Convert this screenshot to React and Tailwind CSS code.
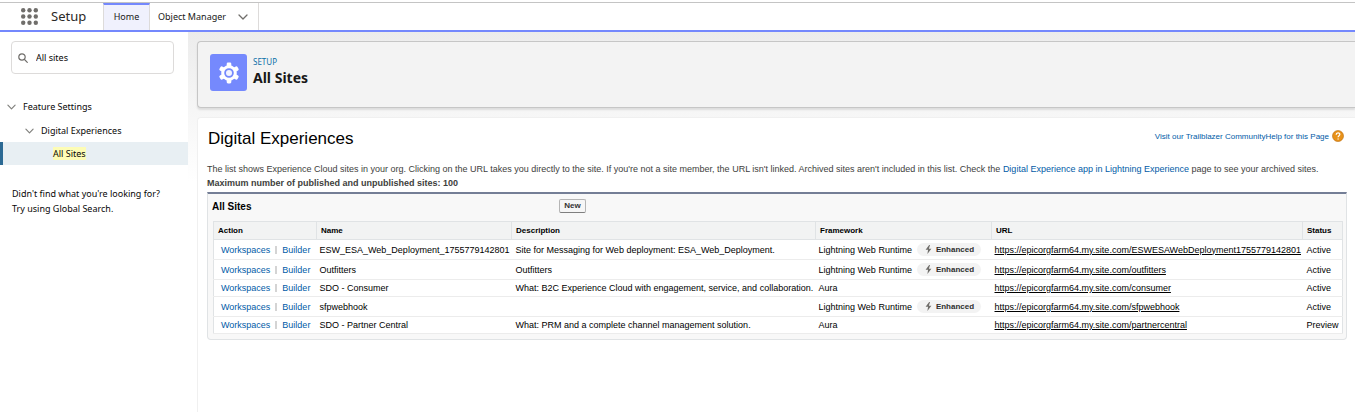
import React from "react";

const sites = [
  { name: "ESW_ESA_Web_Deployment_1755779142801", description: "Site for Messaging for Web deployment: ESA_Web_Deployment.", enhanced: true, path: "ESWESAWebDeployment1755779142801", status: "Active" },
  { name: "Outfitters", description: "Outfitters", enhanced: true, path: "outfitters", status: "Active" },
  { name: "SDO - Consumer", description: "What: B2C Experience Cloud with engagement, service, and collaboration.", enhanced: false, path: "consumer", status: "Active" },
  { name: "sfpwebhook", description: "", enhanced: true, path: "sfpwebhook", status: "Active" },
  { name: "SDO - Partner Central", description: "What: PRM and a complete channel management solution.", enhanced: false, path: "partnercentral", status: "Preview" },
];

const columns = [
  { label: "Action", width: "w-[103px]" },
  { label: "Name", width: "w-[195px]" },
  { label: "Description", width: "w-[304px]" },
  { label: "Framework", width: "w-[176px]" },
  { label: "URL", width: "" },
  { label: "Status", width: "w-[40px]" },
];

function Chevron({ className }) {
  return (
    <svg viewBox="0 0 10 6" className={className} fill="none" stroke="currentColor" strokeWidth="1.3" strokeLinecap="round" strokeLinejoin="round" aria-hidden="true">
      <path d="M1 1l4 4 4-4" />
    </svg>
  );
}

function AppLauncher() {
  const steps = [2.2, 8.5, 14.8];
  return (
    <svg viewBox="0 0 17 17" className="size-[17px]" fill="#706e6b" aria-hidden="true">
      {steps.map((y) => steps.map((x) => <circle key={`${x}-${y}`} cx={x} cy={y} r="2.2" />))}
    </svg>
  );
}

function Gear() {
  const teeth = [0, 60, 120, 180, 240, 300];
  return (
    <svg viewBox="0 0 22 22" className="size-[22px]" aria-hidden="true">
      <circle cx="11" cy="11" r="7.8" fill="#fff" />
      {teeth.map((angle) => (
        <rect key={angle} x="8.7" y="0.6" width="4.6" height="5" rx="1.3" fill="#fff" transform={`rotate(${angle} 11 11)`} />
      ))}
      <circle cx="11" cy="11" r="3.9" fill="#f3f4ff" stroke="#7589fd" strokeWidth="1.8" />
    </svg>
  );
}

function Header() {
  return (
    <header className="border-b-2 border-[#7488fd] pt-[2px]">
      <div className="flex h-7 items-stretch border-t border-[#c4c4c4]">
        <button type="button" aria-label="App Launcher" className="flex w-[51px] items-center justify-end pr-[13px]">
          <AppLauncher />
        </button>
        <span className="flex w-[52px] items-center text-[13px] text-[#2b2826]">Setup</span>
        <nav className="flex text-[9px] text-[#181818]">
          <a href="#home" className="flex w-[47px] items-center justify-center border-x border-t-2 border-x-[#dddbda] border-t-[#7488fd] bg-[#f0f1fd] pb-[2px]">Home</a>
          <a href="#object-manager" className="flex w-[109px] items-center justify-between border-r border-[#dddbda] pl-2 pr-[10px]">
            Object Manager
            <Chevron className="h-[6px] w-[10px] text-[#706e6b]" />
          </a>
        </nav>
      </div>
    </header>
  );
}

function Sidebar() {
  return (
    <aside className="w-[188px] shrink-0 bg-white pt-[9px] text-[9px] text-[#080707]">
      <label className="ml-[11px] mr-[14px] flex h-[33px] items-center gap-2 rounded border border-[#dddbda] px-[6px] pt-px">
        <svg viewBox="0 0 10 10" className="size-[10px] shrink-0" fill="none" stroke="#706e6b" strokeWidth="1.2" strokeLinecap="round" aria-hidden="true">
          <circle cx="4" cy="4" r="3.2" />
          <path d="M6.5 6.5L9.3 9.3" />
        </svg>
        <input aria-label="Quick Find" defaultValue="All sites" className="w-full min-w-0 bg-transparent outline-none" />
      </label>
      <ul className="mt-[21px]">
        <li>
          <button type="button" className="flex h-6 w-full items-center gap-[7px] pl-[7px]">
            <Chevron className="h-[6px] w-[9px] text-[#80807d]" />
            Feature Settings
          </button>
          <ul>
            <li>
              <button type="button" className="flex h-[23px] w-full items-center gap-[7px] pl-[25px]">
                <Chevron className="h-[6px] w-[9px] text-[#80807d]" />
                Digital Experiences
              </button>
              <ul>
                <li>
                  <a href="#all-sites" className="flex h-[23px] items-center border-l-[3px] border-[#2c6a94] bg-[#e8eff3] pl-[50px]">
                    <mark className="bg-[#fdfcb5] leading-[13px] text-inherit">All Sites</mark>
                  </a>
                </li>
              </ul>
            </li>
          </ul>
        </li>
      </ul>
      <p className="mt-[21px] pl-3 leading-[15px]">
        Didn't find what you're looking for?
        <br />
        Try using Global Search.
      </p>
    </aside>
  );
}

function PageHeader() {
  return (
    <section className="flex h-[67px] rounded-l border border-r-0 border-[#c6c6c6] bg-[#f3f3f3] py-3 pl-3 shadow-[0_2px_2px_rgba(0,0,0,0.1)]">
      <span className="flex size-[37px] items-center justify-center rounded-[3px] bg-[#7589fd]">
        <Gear />
      </span>
      <div className="pl-[6px] pt-[2px]">
        <p className="text-[8px] leading-3 text-[#0b6fa8]">SETUP</p>
        <h1 className="text-[14px] font-bold leading-[19px] text-[#181818]">All Sites</h1>
      </div>
    </section>
  );
}

function EnhancedBadge() {
  return (
    <span className="ml-[5px] inline-flex h-[13px] items-center gap-1 rounded-full bg-[#f3f3f3] pl-2 pr-[7px] text-[8px] font-bold text-[#2e2e2e]">
      <svg viewBox="0 0 7 10" className="h-[9px] w-[7px]" fill="#706e6b" aria-hidden="true">
        <path d="M4.2 0L0.3 5.4H3L2.3 10L6.7 4.1H3.9L5.2 0Z" />
      </svg>
      Enhanced
    </span>
  );
}

function SiteTable() {
  return (
    <section className="rounded-b border border-t-2 border-[#e0e3e5] border-t-[#747e96] bg-[#f8f8f8] pb-[5px] pl-1 pr-[3px]">
      <div className="flex h-[27px] items-center pb-[3px]">
        <h3 className="w-[347px] text-[10px] font-bold text-black">All Sites</h3>
        <button type="button" className="h-[14px] w-[27px] rounded-[2px] border border-[#b5b5b5] border-b-[#7f7f7f] bg-[#f6f6f6] text-[8px] font-bold leading-3 text-[#333]">New</button>
      </div>
      <div className="pl-px">
        <table className="w-full table-fixed border-collapse border border-[#e0e3e5] bg-white text-left text-[9px] text-black">
          <thead>
            <tr className="h-[18px] bg-[#f2f3f3] text-[8px]">
              {columns.map((c) => (
                <th key={c.label} scope="col" className={`${c.width} whitespace-nowrap border border-[#e0e3e5] py-0 pl-[4px] font-bold`}>{c.label}</th>
              ))}
            </tr>
          </thead>
          <tbody>
            {sites.map((s) => (
              <tr key={s.name} className={`${s.enhanced ? "h-5" : "h-[17px]"} whitespace-nowrap border-b border-[#ececec] leading-3`}>
                <td className="py-0 pl-[7px] text-[#015ba7]">
                  <div className="flex items-center">
                    <a href="#workspaces">Workspaces</a>
                    <span className="mx-[5px] h-[8px] w-[2px] bg-[#d4d4d4]" />
                    <a href="#builder">Builder</a>
                  </div>
                </td>
                <td className="py-0 pl-[3px]">{s.name}</td>
                <td className="py-0 pl-1">{s.description}</td>
                <td className="py-0 pl-[3px]">
                  <div className="flex items-center">
                    {s.enhanced ? "Lightning Web Runtime" : "Aura"}
                    {s.enhanced && <EnhancedBadge />}
                  </div>
                </td>
                <td className="py-0 pl-[3px]">
                  <a href={`https://epicorgfarm64.my.site.com/${s.path}`} className="underline">{`https://epicorgfarm64.my.site.com/${s.path}`}</a>
                </td>
                <td className="py-0 pl-1">{s.status}</td>
              </tr>
            ))}
          </tbody>
        </table>
      </div>
    </section>
  );
}

export default function App() {
  return (
    <div className="flex min-h-screen flex-col bg-white font-['Noto_Sans','Open_Sans',sans-serif]">
      <Header />
      <div className="flex flex-1">
        <Sidebar />
        <main className="flex min-w-0 flex-1 flex-col bg-[linear-gradient(#ececec,#ffffff_150px)] pl-[9px] pt-[9px]">
          <PageHeader />
          <div className="mt-[9px] flex-1 rounded-tl border-l border-t border-[#f0f0f0] bg-white pl-[9px] pr-2 pt-[11px] font-['Liberation_Sans',Arial,sans-serif]">
            <div className="flex items-start justify-between">
              <h2 className="pl-px text-[17px] leading-5 text-black">Digital Experiences</h2>
              <div className="flex items-center gap-[3px] pr-[3px] text-[8px] text-[#015ba7]">
                <span className="pt-[2px]">
                  <a href="#community">Visit our Trailblazer Community</a>
                  <a href="#help">Help for this Page</a>
                </span>
                <svg viewBox="0 0 12 12" className="size-3" aria-hidden="true">
                  <circle cx="6" cy="6" r="5.5" fill="#e8921a" stroke="#b9690d" strokeWidth="0.6" />
                  <path d="M4.2 4.7C4.2 2.3 7.9 2.4 7.8 4.5C7.7 5.7 6.1 5.7 6.1 7.2M6.1 8.4V9.5" fill="none" stroke="#fff" strokeWidth="1.3" />
                </svg>
              </div>
            </div>
            <div className="mb-[2px] mt-[13px] text-[9px] leading-[14px] text-[#3e3e3c]">
              <p>
                The list shows Experience Cloud sites in your org. Clicking on the URL takes you directly to the site. If you're not a site member, the URL isn't linked. Archived sites aren't included in this list. Check the{" "}
                <a href="#lightning-app" className="text-[#015ba7]">Digital Experience app in Lightning Experience</a> page to see your archived sites.
              </p>
              <p className="font-bold">Maximum number of published and unpublished sites: 100</p>
            </div>
            <SiteTable />
          </div>
        </main>
      </div>
    </div>
  );
}
